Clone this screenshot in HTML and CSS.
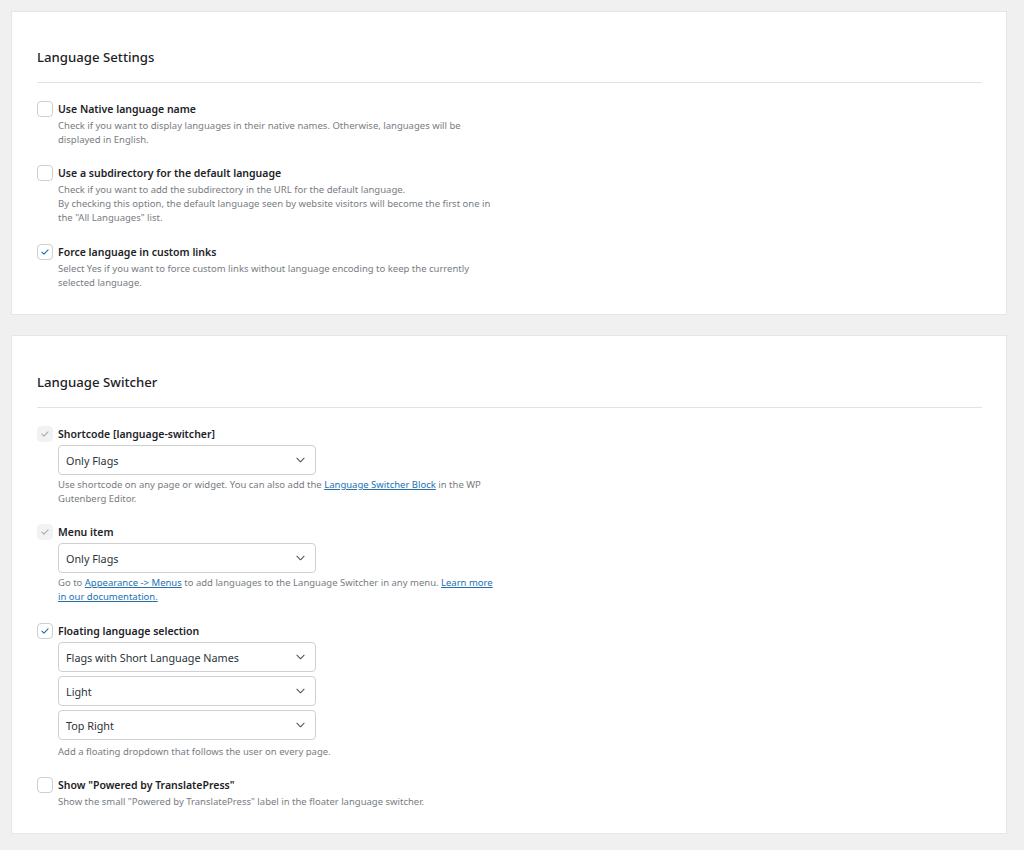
FILE: index.html
```html
<!DOCTYPE html>
<html lang="en">
<head>
<meta charset="utf-8">
<title>TranslatePress Settings</title>
<link rel="stylesheet" href="styles.css">
</head>
<body>
<main class="page">
  <section class="card">
    <h2 class="card-title">Language Settings</h2>
    <div class="items">
      <div class="item">
        <span class="cb"></span>
        <div class="body">
          <div class="label">Use Native language name</div>
          <p class="desc">Check if you want to display languages in their native names. Otherwise, languages will be<br>displayed in English.</p>
        </div>
      </div>
      <div class="item">
        <span class="cb"></span>
        <div class="body">
          <div class="label">Use a subdirectory for the default language</div>
          <p class="desc">Check if you want to add the subdirectory in the URL for the default language.<br>By checking this option, the default language seen by website visitors will become the first one in<br>the "All Languages" list.</p>
        </div>
      </div>
      <div class="item item-3">
        <span class="cb checked"><svg viewBox="0 0 16 16"><path d="M4.5 8.2l2.3 2.3 4.7-4.9"/></svg></span>
        <div class="body">
          <div class="label">Force language in custom links</div>
          <p class="desc">Select Yes if you want to force custom links without language encoding to keep the currently<br>selected language.</p>
        </div>
      </div>
    </div>
  </section>

  <section class="card card-2">
    <h2 class="card-title">Language Switcher</h2>
    <div class="items">
      <div class="item">
        <span class="cb disabled"><svg viewBox="0 0 16 16"><path d="M4.5 8.2l2.3 2.3 4.7-4.9"/></svg></span>
        <div class="body">
          <div class="label">Shortcode [language-switcher]</div>
          <div class="select">Only Flags<svg class="chev" viewBox="0 0 10 6"><path d="M1 1l4 4 4-4"/></svg></div>
          <p class="desc desc-after">Use shortcode on any page or widget. You can also add the <a href="#">Language Switcher Block</a> in the WP<br>Gutenberg Editor.</p>
        </div>
      </div>
      <div class="item">
        <span class="cb disabled"><svg viewBox="0 0 16 16"><path d="M4.5 8.2l2.3 2.3 4.7-4.9"/></svg></span>
        <div class="body">
          <div class="label">Menu item</div>
          <div class="select">Only Flags<svg class="chev" viewBox="0 0 10 6"><path d="M1 1l4 4 4-4"/></svg></div>
          <p class="desc desc-after">Go to <a href="#">Appearance -&gt; Menus</a> to add languages to the Language Switcher in any menu. <a href="#">Learn more</a><br><a href="#">in our documentation.</a></p>
        </div>
      </div>
      <div class="item item-float">
        <span class="cb checked"><svg viewBox="0 0 16 16"><path d="M4.5 8.2l2.3 2.3 4.7-4.9"/></svg></span>
        <div class="body">
          <div class="selects">
            <div class="label">Floating language selection</div>
            <div class="select">Flags with Short Language Names<svg class="chev" viewBox="0 0 10 6"><path d="M1 1l4 4 4-4"/></svg></div>
            <div class="select">Light<svg class="chev" viewBox="0 0 10 6"><path d="M1 1l4 4 4-4"/></svg></div>
            <div class="select">Top Right<svg class="chev" viewBox="0 0 10 6"><path d="M1 1l4 4 4-4"/></svg></div>
          </div>
          <p class="desc desc-after">Add a floating dropdown that follows the user on every page.</p>
        </div>
      </div>
      <div class="item item-last">
        <span class="cb"></span>
        <div class="body">
          <div class="label">Show "Powered by TranslatePress"</div>
          <p class="desc">Show the small "Powered by TranslatePress" label in the floater language switcher.</p>
        </div>
      </div>
    </div>
  </section>
</main>
</body>
</html>
```

FILE: styles.css
```css
* { box-sizing: border-box; }

html, body {
  margin: 0;
  padding: 0;
  background: #f0f0f0;
}

body {
  font-family: "Noto Sans", "Open Sans", sans-serif;
  color: #1d2327;
}

.page {
  padding: 11px 17px 20px 11px;
  display: flex;
  flex-direction: column;
  gap: 20px;
}

.card {
  background: #ffffff;
  border: 1px solid #e6e6e6;
  padding: 35px 24px 24px 25px;
}

.card-2 {
  padding-top: 36px;
  padding-bottom: 24px;
}

.card-title {
  margin: 0;
  font-size: 13.2px;
  font-weight: 500;
  line-height: 20px;
  color: #1d2327;
  padding-bottom: 15px;
  border-bottom: 1px solid #e2e2e2;
}

.items {
  display: flex;
  flex-direction: column;
  gap: 18px;
  padding-top: 18px;
}

.item {
  display: grid;
  grid-template-columns: 16px 1fr;
  column-gap: 5px;
  align-items: start;
}

.item-3 {
  margin-top: 1px;
}

.item-float {
  margin-top: 1px;
}

.cb {
  width: 16px;
  height: 16px;
  border: 1px solid #cfcfcf;
  border-radius: 4px;
  background: #fff;
  display: flex;
  align-items: center;
  justify-content: center;
}

.cb svg {
  width: 14px;
  height: 14px;
  fill: none;
  stroke: #2271b1;
  stroke-width: 1.3;
  stroke-linecap: round;
  stroke-linejoin: round;
}

.cb.disabled {
  background: #f2f2f2;
  border-color: #f2f2f2;
}

.cb.disabled svg {
  stroke: #a9aeb4;
}

.body {
  min-width: 0;
}

.label {
  font-size: 10.5px;
  font-weight: 600;
  line-height: 16px;
  color: #1d2327;
}

.desc {
  margin: 2px 0 0;
  font-size: 9.5px;
  line-height: 14px;
  color: #787c82;
}

.desc-after {
  margin-top: 3px;
}

.item-float .desc-after {
  margin-top: 5px;
}

.desc a {
  color: #2271b1;
  text-decoration: underline;
}

.select {
  margin-top: 3px;
  width: 258px;
  height: 30px;
  border: 1px solid #cfd0d2;
  border-radius: 4px;
  background: #fff;
  display: flex;
  align-items: center;
  justify-content: space-between;
  padding: 0 10px 0 7px;
  font-size: 10.8px;
  color: #2c3338;
}

.selects {
  display: flex;
  flex-direction: column;
}

.selects .select + .select {
  margin-top: 4px;
}

.chev {
  width: 9px;
  height: 6px;
  fill: none;
  stroke: #50575e;
  stroke-width: 1.2;
  stroke-linecap: round;
  stroke-linejoin: round;
}
```
